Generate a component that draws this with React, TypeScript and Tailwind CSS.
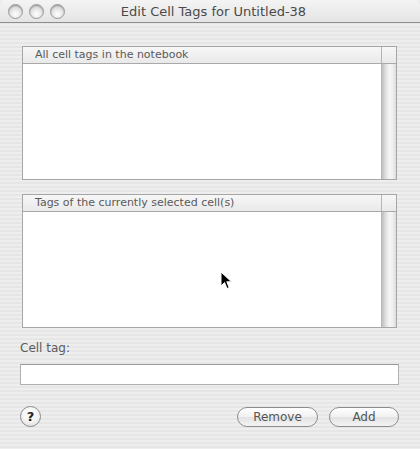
import React from 'react';

const stripes = 'bg-[repeating-linear-gradient(180deg,#eeeeee_0px,#eeeeee_2px,#e6e6e6_2px,#e6e6e6_4px)]';
const font = 'font-["DejaVu_Sans","Lucida_Grande",Verdana,sans-serif]';

function TrafficLight() {
  return (
    <div className="w-[15px] h-[15px] rounded-full border border-[#9a9a9a] bg-[radial-gradient(circle_at_50%_70%,#ffffff_0%,#e6e6e6_45%,#bdbdbd_100%)] shadow-[inset_0_1px_1px_rgba(0,0,0,0.25)]" />
  );
}

function TagList({ title }: { title: string }) {
  return (
    <div className="flex flex-col h-[134px] border border-[#a6a6a6] bg-white">
      <div className="flex h-[17px] shrink-0 border-b border-[#a9a9a9] bg-[linear-gradient(180deg,#f7f7f7,#e9e9e9)]">
        <div className="flex-1 pl-[12px] text-[11px] leading-[16px] text-[#5a5a5a]">{title}</div>
        <div className="w-[15px] border-l border-[#b4b4b4]" />
      </div>
      <div className="flex flex-1">
        <div className="flex-1" />
        <div className="w-[15px] bg-[linear-gradient(90deg,#b4b4b4_0%,#d8d8d8_25%,#f6f6f6_55%,#eeeeee_80%,#dcdcdc_100%)]" />
      </div>
    </div>
  );
}

function PillButton({ label, width }: { label: string; width: string }) {
  return (
    <button
      className={`${width} h-[20px] rounded-full border border-[#8c8c8c] bg-[linear-gradient(180deg,#ffffff_0%,#f1f1f1_50%,#e2e2e2_51%,#f4f4f4_100%)] text-[12px] leading-[18px] text-[#555] ${font}`}
    >
      {label}
    </button>
  );
}

export default function App() {
  return (
    <div className={`relative w-[420px] h-[449px] overflow-hidden ${stripes} ${font}`}>
      {/* Title bar */}
      <div className="flex items-center h-[23px] rounded-t-[6px] border-b border-[#8e8e8e] bg-[linear-gradient(180deg,#f4f4f4,#e4e4e4)] pl-[8px]">
        <div className="flex gap-[6px]">
          <TrafficLight />
          <TrafficLight />
          <TrafficLight />
        </div>
        <div className="flex-1 text-center text-[13px] text-[#4a4a4a] pr-[58px] pt-[1px]">
          Edit Cell Tags for Untitled-38
        </div>
      </div>

      {/* Content */}
      <div className="flex flex-col pt-[23px] px-[20px]">
        <div className="flex flex-col gap-[14px] pl-[2px] pr-[3px]">
          <TagList title="All cell tags in the notebook" />
          <TagList title="Tags of the currently selected cell(s)" />
        </div>

        <div className="mt-[12px] text-[12px] leading-[16px] text-[#5a5a5a]">Cell tag:</div>
        <div className="mt-[8px] mr-[1px] h-[21px] border border-[#b0b0b0] border-t-[#9a9a9a] bg-white" />

        <div className="flex items-center mt-[21px]">
          <div className="flex items-center justify-center w-[21px] h-[21px] rounded-full border border-[#8a8a8a] bg-[radial-gradient(circle_at_50%_30%,#ffffff_0%,#f3f3f3_55%,#d4d4d4_100%)] text-[13px] font-bold leading-none text-[#222]">
            ?
          </div>
          <div className="flex-1" />
          <div className="flex gap-[11px] pr-[1px]">
            <PillButton label="Remove" width="w-[81px]" />
            <PillButton label="Add" width="w-[70px]" />
          </div>
        </div>
      </div>

      {/* Mouse cursor */}
      <svg className="absolute left-[220px] top-[271px]" width="13" height="19" viewBox="0 0 13 19">
        <path d="M1 1 L1 15 L4.5 11.5 L7 17.5 L9.2 16.6 L6.8 10.8 L11.5 10.8 Z" fill="#000" stroke="#fff" strokeWidth="1" strokeLinejoin="round" />
      </svg>
    </div>
  );
}
